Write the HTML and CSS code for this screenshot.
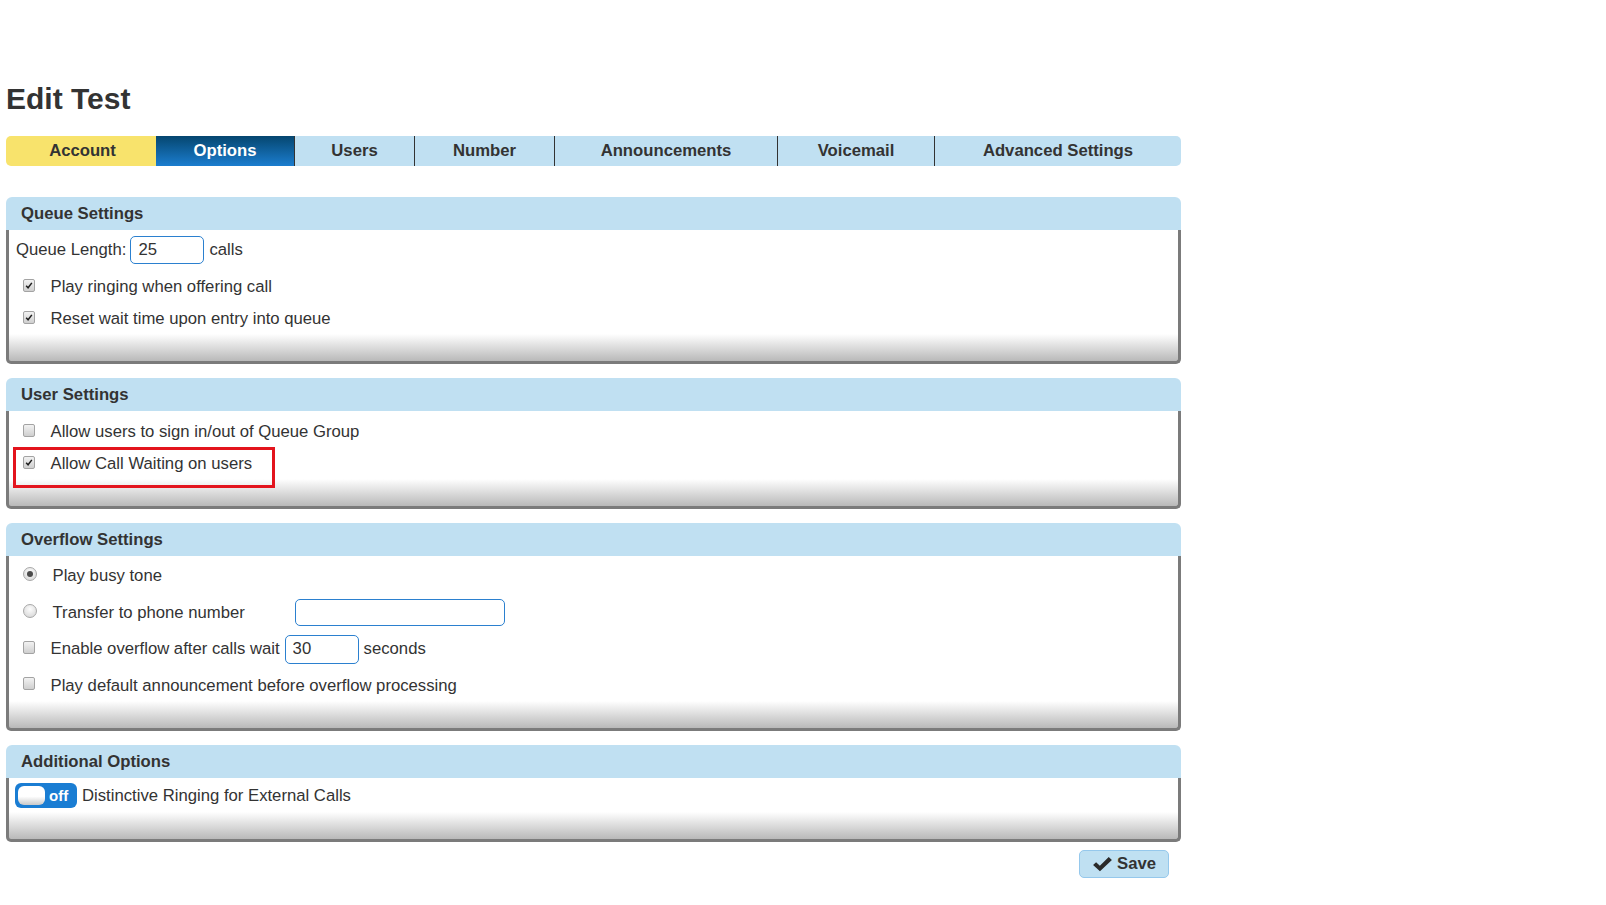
FILE: index.html
```html
<!DOCTYPE html>
<html lang="en">
<head>
    <meta charset="UTF-8">
    <title>Edit Test</title>
    <link rel="stylesheet" href="styles.css">
</head>
<body>
<div class="page">
    <h1 class="title">Edit Test</h1>

    <nav class="tabs">
        <a class="tab tab-account" href="#">Account</a>
        <a class="tab tab-options tab-active" href="#">Options</a>
        <a class="tab tab-users" href="#">Users</a>
        <a class="tab tab-number" href="#">Number</a>
        <a class="tab tab-announce" href="#">Announcements</a>
        <a class="tab tab-voicemail" href="#">Voicemail</a>
        <a class="tab tab-advanced" href="#">Advanced Settings</a>
    </nav>

    <!-- Queue settings -->
    <section class="panel panel-first">
        <h2 class="panel-head">Queue Settings</h2>
        <div class="panel-body queue">
            <div class="field">Queue Length:<input class="txt txt-short" type="text" value="25">calls</div>
            <label class="opt">
                <span class="cb"><svg viewBox="0 0 12 12"><path d="M2.6 6.2 L4.9 8.7 L9.4 2.8"/></svg></span>
                Play ringing when offering call
            </label>
            <label class="opt">
                <span class="cb"><svg viewBox="0 0 12 12"><path d="M2.6 6.2 L4.9 8.7 L9.4 2.8"/></svg></span>
                Reset wait time upon entry into queue
            </label>
        </div>
    </section>

    <!-- User settings -->
    <section class="panel">
        <h2 class="panel-head">User Settings</h2>
        <div class="panel-body users">
            <label class="opt">
                <span class="cb"></span>
                Allow users to sign in/out of Queue Group
            </label>
            <label class="opt">
                <span class="cb"><svg viewBox="0 0 12 12"><path d="M2.6 6.2 L4.9 8.7 L9.4 2.8"/></svg></span>
                Allow Call Waiting on users
                <span class="highlight"></span>
            </label>
        </div>
    </section>

    <!-- Overflow settings -->
    <section class="panel">
        <h2 class="panel-head">Overflow Settings</h2>
        <div class="panel-body overflow">
            <label class="opt">
                <span class="rb rb-on"></span>
                Play busy tone
            </label>
            <label class="opt">
                <span class="rb"></span>
                <span class="opt-wide">Transfer to phone number</span><input class="txt txt-phone" type="text">
            </label>
            <label class="opt">
                <span class="cb"></span>
                Enable overflow after calls wait<input class="txt txt-wait" type="text" value="30">seconds
            </label>
            <label class="opt">
                <span class="cb"></span>
                Play default announcement before overflow processing
            </label>
        </div>
    </section>

    <!-- Additional -->
    <section class="panel">
        <h2 class="panel-head">Additional Options</h2>
        <div class="panel-body additional">
            <div class="opt-toggle">
                <span class="toggle"><span class="knob"></span>off</span>
                Distinctive Ringing for External Calls
            </div>
        </div>
    </section>

    <div class="actions">
        <button class="save" type="button">
            <svg viewBox="0 0 22 17"><path d="M1 9.5 L4.2 6.6 L8.2 10.4 L17.6 1 L21 4.2 L8.3 16.2 Z"/></svg>
            Save
        </button>
    </div>
</div>
</body>
</html>
```

FILE: styles.css
```css
body {
    margin: 0;
    font-family: "Liberation Sans", Arial, sans-serif;
    font-size: 16.7px;
    color: #333;
    background: #fff;
}
.page {
    width: 1175px;
    padding: 82px 0 20px 6px;
}
.title {
    margin: 0 0 20px;
    font-size: 30px;
    line-height: 34px;
    font-weight: bold;
    color: #333;
}
/* Tabs */
.tabs {
    display: flex;
    height: 30px;
}
.tab {
    box-sizing: border-box;
    display: flex;
    align-items: center;
    justify-content: center;
    background: #c0e0f2;
    color: #333;
    font-weight: bold;
    font-size: 16.7px;
    text-decoration: none;
    border-left: 1px solid #333;
}
.tab-account {
    width: 150px;
    padding-left: 3px;
    background: #f8e36c;
    border-left: none;
    border-radius: 5px 0 0 5px;
}
.tab-options { width: 138px; }
.tab-users { width: 120px; }
.tab-number { width: 140px; }
.tab-announce { width: 223px; }
.tab-voicemail { width: 157px; }
.tab-advanced {
    width: 247px;
    border-radius: 0 5px 5px 0;
}
.tab-active {
    background: linear-gradient(#05466f, #1b7dcf);
    color: #fff;
    border-left: none;
}
/* Panels */
.panel {
    margin-top: 14px;
}
.panel-first {
    margin-top: 31px;
}
.panel-head {
    box-sizing: border-box;
    height: 33px;
    margin: 0;
    padding-left: 15px;
    display: flex;
    align-items: center;
    background: #c0e0f2;
    border-radius: 6px 6px 0 0;
    font-size: 16.7px;
    font-weight: bold;
    color: #333;
}
.panel-body {
    border: 3px solid #7b7b7b;
    border-top: none;
    border-radius: 0 0 5px 5px;
    background: linear-gradient(to bottom, #fff 0, #fff calc(100% - 27px), #f2f2f2 calc(100% - 22px), #b9b9b9 100%);
    padding-left: 7px;
    padding-right: 7px;
}
.queue { padding-top: 6px; padding-bottom: 26px; }
.users { padding-top: 5px; padding-bottom: 26px; }
.overflow { padding-top: 2px; padding-bottom: 24px; }
.additional { padding-top: 5px; padding-bottom: 31px; }

.field {
    display: flex;
    align-items: center;
    height: 28px;
    margin-bottom: 7px;
}
.opt {
    position: relative;
    display: flex;
    align-items: center;
    height: 32px;
    padding-left: 6.5px;
}
.overflow .opt {
    height: 36.5px;
}
.opt-wide {
    display: inline-block;
    width: 242px;
}
/* Text inputs */
.txt {
    box-sizing: border-box;
    height: 28px;
    border: 1px solid #2b80cf;
    border-radius: 5px;
    padding: 0 7px;
    font-family: inherit;
    font-size: 16.7px;
    color: #333;
    background: #fff;
}
.txt-short {
    width: 74px;
    margin: 0 5px 0 4px;
}
.txt-phone {
    width: 210px;
    height: 27px;
}
.txt-wait {
    width: 74px;
    height: 29px;
    margin: 0 5px 0 5px;
}
/* Checkbox and radio */
.cb {
    box-sizing: border-box;
    flex: none;
    width: 12px;
    height: 13px;
    margin: 0 16px 4px 0;
    border: 1px solid #a3a3a3;
    border-radius: 2px;
    background: linear-gradient(#f2f2f2, #cfcfcf);
    display: flex;
    align-items: center;
    justify-content: center;
}
.cb svg {
    width: 11px;
    height: 11px;
}
.cb path {
    fill: none;
    stroke: #1e1e1e;
    stroke-width: 1.8;
}
.rb {
    box-sizing: border-box;
    flex: none;
    width: 14px;
    height: 14px;
    margin: 0 16px 4px 0;
    border: 1px solid #a8a8a8;
    border-radius: 50%;
    background: radial-gradient(circle at 50% 35%, #fdfdfd, #d2d2d2);
    display: flex;
    align-items: center;
    justify-content: center;
}
.rb-on::after {
    content: "";
    width: 6px;
    height: 6px;
    border-radius: 50%;
    background: #4a4a4a;
}
/* Red annotation box */
.highlight {
    position: absolute;
    left: -3px;
    top: -1px;
    width: 262px;
    height: 41px;
    box-sizing: border-box;
    border: 3px solid #e3141d;
}
/* Toggle */
.opt-toggle {
    display: flex;
    align-items: center;
    height: 25px;
}
.toggle {
    box-sizing: border-box;
    display: flex;
    align-items: center;
    width: 62px;
    height: 25px;
    margin: 0 5px 0 -1px;
    padding: 0 3px;
    border-radius: 6px;
    background: #1a7dd3;
    color: #fff;
    font-weight: bold;
    font-size: 15px;
}
.knob {
    width: 27px;
    height: 19px;
    margin-right: 4px;
    border-radius: 6px;
    background: linear-gradient(#fff 0, #fff 55%, #c9c9c9 100%);
}
/* Save */
.actions {
    display: flex;
    justify-content: flex-end;
    padding-right: 12px;
    margin-top: 8px;
}
.save {
    box-sizing: border-box;
    display: flex;
    align-items: center;
    width: 90px;
    height: 28px;
    padding: 0 0 0 12px;
    background: #bfe0f2;
    border: 1px solid #95c8ec;
    border-radius: 5px;
    font-family: inherit;
    font-size: 16.7px;
    font-weight: bold;
    color: #333;
}
.save svg {
    width: 21px;
    height: 16px;
    margin-right: 4px;
}
.save path {
    fill: #2a2a2a;
}
```
